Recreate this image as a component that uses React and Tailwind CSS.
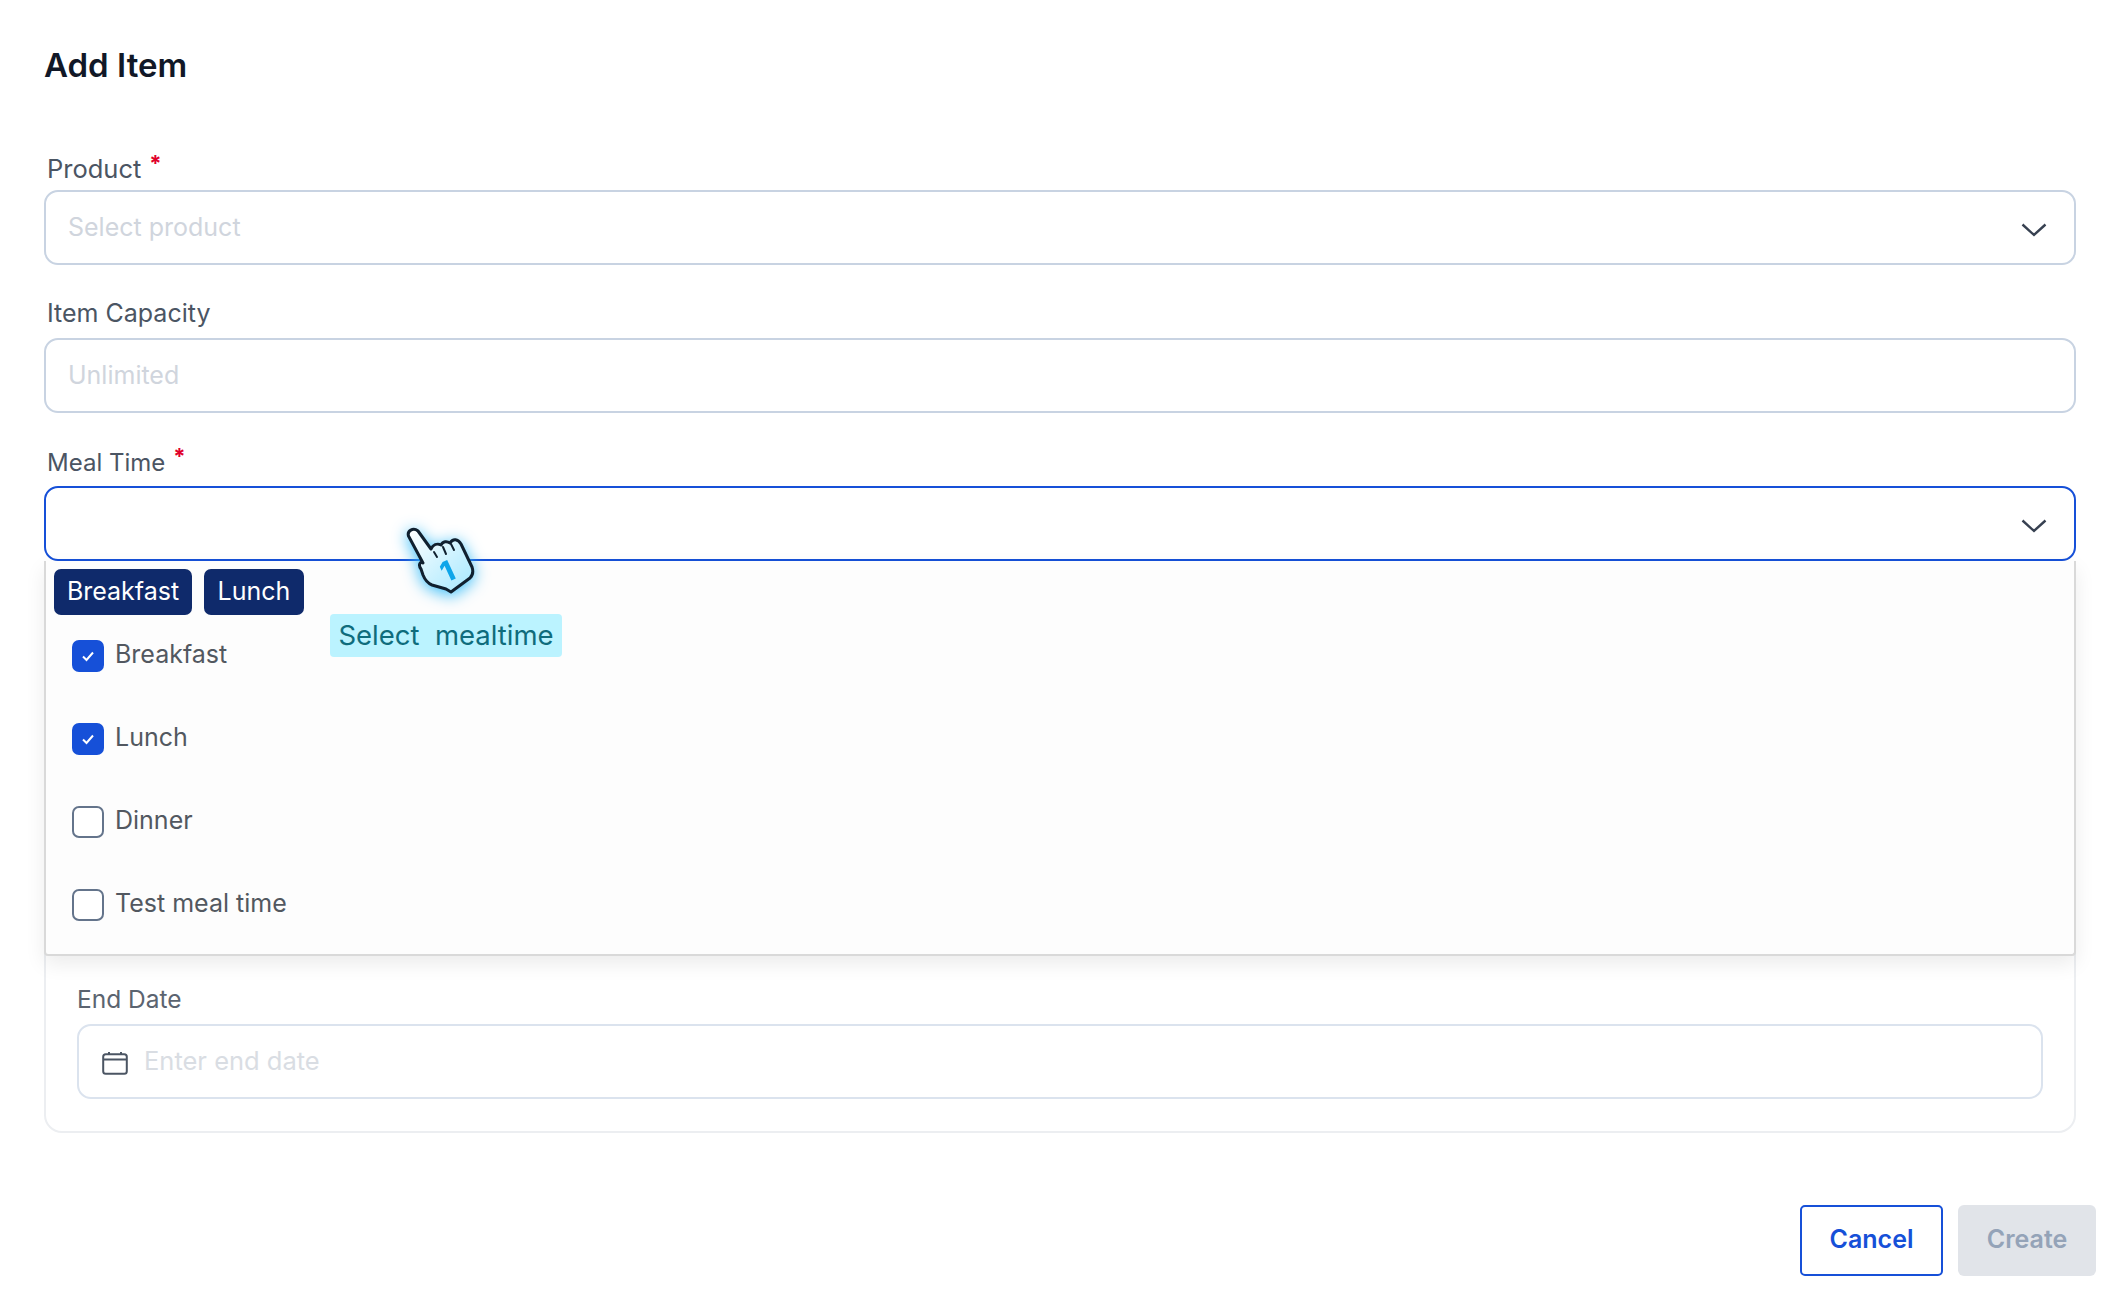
const font = { fontFamily: 'Inter, "Liberation Sans", sans-serif' };

function Chevron() {
  return (
    <svg width="26" height="14" viewBox="0 0 26 14" fill="none" className="mt-[4px]">
      <path d="M1.5 1.5L13 12L24.5 1.5" stroke="#374151" strokeWidth="2.4" />
    </svg>
  );
}

function CalendarIcon() {
  return (
    <svg width="26" height="24" viewBox="0 0 26 24" fill="none" className="mt-[3px] shrink-0">
      <rect x="1.2" y="3.2" width="23.6" height="19.6" rx="2.5" stroke="#4b5563" strokeWidth="2" />
      <path d="M1.5 8.5H24.5M7 1V4M19 1V4" stroke="#4b5563" strokeWidth="2" />
    </svg>
  );
}

function Label({ children, required, className = '' }) {
  return (
    <label className={`block pl-[3px] leading-[30px] text-[#4b5563] ${className}`}>
      {children}
      {required && <span className="relative top-[-7px] ml-[8px] text-[22px] font-bold text-[#e0002b]">*</span>}
    </label>
  );
}

function Field({ placeholder, icon, active, size = 'text-[25px]' }) {
  return (
    <div
      className={`flex h-[75px] items-center justify-between rounded-[14px] border-2 bg-white pl-[22px] pr-[27px] text-[#d0d5dd] ${size} ${
        active ? 'border-[#1650d8]' : 'border-[#c8d3e2]'
      }`}
    >
      <span>{placeholder}</span>
      {icon && <Chevron />}
    </div>
  );
}

function Option({ label, checked }) {
  return (
    <div className="flex h-[83px] items-center gap-[11px] pl-[26px]">
      {checked ? (
        <span className="mt-[3px] flex h-[32px] w-[32px] items-center justify-center rounded-[7px] bg-[#1650d8]">
          <svg width="14" height="12" viewBox="0 0 14 12" fill="none">
            <path d="M2 6.5L5.5 10L12 2.5" stroke="#ffffff" strokeWidth="2" />
          </svg>
        </span>
      ) : (
        <span className="mt-[3px] h-[32px] w-[32px] rounded-[7px] border-2 border-[#64748b] bg-white" />
      )}
      <span className="text-[25px] text-[#525860]">{label}</span>
    </div>
  );
}

function HandCursor() {
  return (
    <svg
      width="120"
      height="100"
      viewBox="0 0 120 100"
      className="absolute left-[336px] top-[-52px] drop-shadow-[0_3px_8px_#38bdf8]"
    >
      <defs>
        <linearGradient id="hand" x1="0" y1="0" x2="1" y2="1">
          <stop offset="0" stopColor="#ffffff" />
          <stop offset="1" stopColor="#a5e8ff" />
        </linearGradient>
      </defs>
      <path
        d="M28.5 27C27 22 33 18 38 22L51 40C53 36 57 34 61 36C63 32 67 32 70 34C73 29 78 30 81 35L92 58C94 64 92 67 90 69L71 83L66 80L52 76C47 74 45 71 43 66L41 60C38 56 40 52 43 54Z"
        fill="url(#hand)"
        stroke="#10202f"
        strokeWidth="3"
        strokeLinejoin="round"
      />
      <path d="M54 43L57 48M63 38L66 45M71 35L74 41" fill="none" stroke="#10202f" strokeWidth="2" strokeLinecap="round" />
      <text x="66" y="74" fontSize="28" fontWeight="800" fill="#0ea5e9" transform="rotate(-25 66 74)" style={font}>
        1
      </text>
    </svg>
  );
}

export default function App() {
  return (
    <div className="min-h-screen bg-white" style={font}>
      <div className="pl-[44px] pr-[46px] pt-[45px]">
        <h1 className="text-[33px] font-semibold leading-[40px] text-[#111827]">Add Item</h1>

        <div className="mt-[69px]">
          <Label required className="text-[25.5px]">Product</Label>
          <div className="mt-[5px]"><Field placeholder="Select product" icon /></div>
        </div>

        <div className="mt-[33px]">
          <Label className="text-[25px]">Item Capacity</Label>
          <div className="mt-[10px]"><Field placeholder="Unlimited" /></div>
        </div>

        <div className="mt-[35px]">
          <Label required className="text-[24px]">Meal Time</Label>
          <div className="relative mt-[8px]">
            <Field active icon />
            <div className="absolute left-0 right-0 top-[75px] z-10 h-[395px] rounded-b-[4px] border-2 border-t-0 border-[#d9d9d9] bg-[#fdfdfd] shadow-[0_8px_20px_rgba(0,0,0,0.08)]">
              <div className="flex gap-[12px] pl-[8px] pt-[8px]">
                <span className="flex h-[46px] w-[138px] items-center justify-center rounded-[7px] bg-[#0f2a6b] text-[25px] text-white">Breakfast</span>
                <span className="flex h-[46px] w-[100px] items-center justify-center rounded-[7px] bg-[#0f2a6b] text-[25px] text-white">Lunch</span>
              </div>
              <div className="-mt-[2px]">
                <Option label="Breakfast" checked />
                <Option label="Lunch" checked />
                <Option label="Dinner" />
                <Option label="Test meal time" />
              </div>
            </div>
            <span className="absolute left-[286px] top-[128px] z-20 flex h-[43px] w-[232px] items-center justify-center whitespace-pre rounded-[4px] bg-[#bbf3ff] text-[27.5px] text-[#0f6c7c]">
              Select  mealtime
            </span>
            <div className="absolute left-0 top-[75px] z-20">
              <HandCursor />
            </div>
          </div>
          <div className="mt-[221px] rounded-[18px] border-2 border-[#eceef1] px-[31px] pb-[32px] pt-[200px]">
            <label className="block text-[24.5px] leading-[30px] text-[#5b6470]">End Date</label>
            <div className="mt-[10px] flex h-[75px] items-center gap-[16px] rounded-[14px] border-2 border-[#dbe3ee] pl-[23px] text-[25.5px] text-[#d9dde3]">
              <CalendarIcon />
              <span>Enter end date</span>
            </div>
          </div>
        </div>
      </div>

      <div className="mt-[72px] flex justify-end gap-[15px] pr-[26px]">
        <button className="h-[71px] w-[143px] rounded-[5px] border-2 border-[#1650d8] bg-white pb-[2px] text-[25px] font-semibold text-[#1650d8]">Cancel</button>
        <button className="h-[71px] w-[138px] rounded-[6px] bg-[#e1e4e9] pb-[2px] text-[25px] font-semibold text-[#94a3b8]">Create</button>
      </div>
    </div>
  );
}
